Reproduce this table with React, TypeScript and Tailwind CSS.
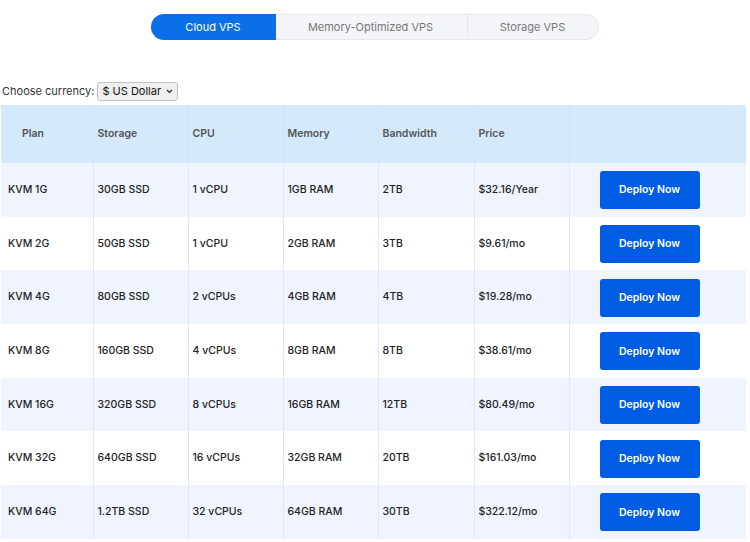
const plans = [
  ["KVM 1G", "30GB SSD", "1 vCPU", "1GB RAM", "2TB", "$32.16/Year"],
  ["KVM 2G", "50GB SSD", "1 vCPU", "2GB RAM", "3TB", "$9.61/mo"],
  ["KVM 4G", "80GB SSD", "2 vCPUs", "4GB RAM", "4TB", "$19.28/mo"],
  ["KVM 8G", "160GB SSD", "4 vCPUs", "8GB RAM", "8TB", "$38.61/mo"],
  ["KVM 16G", "320GB SSD", "8 vCPUs", "16GB RAM", "12TB", "$80.49/mo"],
  ["KVM 32G", "640GB SSD", "16 vCPUs", "32GB RAM", "20TB", "$161.03/mo"],
  ["KVM 64G", "1.2TB SSD", "32 vCPUs", "64GB RAM", "30TB", "$322.12/mo"],
];

const headers = ["Storage", "CPU", "Memory", "Bandwidth", "Price"];

export default function App() {
  return (
    <div className="w-[750px] h-[542px] overflow-hidden bg-white font-['Inter','Noto_Sans',sans-serif] text-[#222]">
      {/* product tabs */}
      <div className="flex justify-center pt-[14px]">
        <div className="flex h-[26px] rounded-full border border-[#e4e7ec] bg-[#f3f5f8] text-[11px] text-[#777] ml-[-1px]">
          <div className="w-[125px] flex items-center justify-center rounded-l-full bg-[#0a6fe8] text-white -m-px">
            Cloud VPS
          </div>
          <div className="w-[193px] flex items-center justify-center border-r border-[#e4e7ec]">
            Memory-Optimized VPS
          </div>
          <div className="w-[130px] flex items-center justify-center">Storage VPS</div>
        </div>
      </div>

      {/* currency */}
      <div className="flex items-center gap-[3px] pl-[2px] mt-[41px] h-[20px] text-[11px] text-[#333]">
        <span>Choose currency:</span>
        <div className="flex items-center gap-[5px] h-[19px] px-[4px] rounded-[3px] border border-[#c4c4c4] bg-[#efefef] text-[#111]">
          <span>$ US Dollar</span>
          <svg width="7" height="5" viewBox="0 0 7 5" fill="none" stroke="#222" strokeWidth="1.1">
            <path d="M1 1l2.5 2.5L6 1" />
          </svg>
        </div>
      </div>

      {/* plan table */}
      <table className="mt-[4px] ml-px w-[745px] border-collapse table-fixed text-[10.5px]">
        <colgroup>
          <col className="w-[92px]" />
          <col className="w-[95px]" />
          <col className="w-[95px]" />
          <col className="w-[95px]" />
          <col className="w-[96px]" />
          <col className="w-[95px]" />
          <col />
        </colgroup>
        <thead>
          <tr className="h-[58px] bg-[#d5e9fd] text-[#555] font-semibold">
            <th className="text-left font-semibold pl-[21px] border-r border-[#cfe2f7]">Plan</th>
            {headers.map((h) => (
              <th key={h} className="text-left font-semibold pl-[4px] border-r border-[#cfe2f7]">
                {h}
              </th>
            ))}
            <th />
          </tr>
        </thead>
        <tbody className="font-medium">
          {plans.map((row, i) => (
            <tr key={row[0]} className={`h-[53.7px] ${i % 2 === 0 ? "bg-[#eff4ff]" : "bg-white"}`}>
              {row.map((cell, j) => (
                <td
                  key={j}
                  className={`border-r border-[#dfe8f8] ${j === 0 ? "pl-[7px]" : "pl-[4px]"}`}
                >
                  {cell}
                </td>
              ))}
              <td className="pl-[30px] pt-[1px]">
                <button className="w-[100px] h-[38px] rounded-[3px] bg-[#005ce3] text-white font-semibold text-[10.5px]">
                  Deploy Now
                </button>
              </td>
            </tr>
          ))}
        </tbody>
      </table>
    </div>
  );
}
